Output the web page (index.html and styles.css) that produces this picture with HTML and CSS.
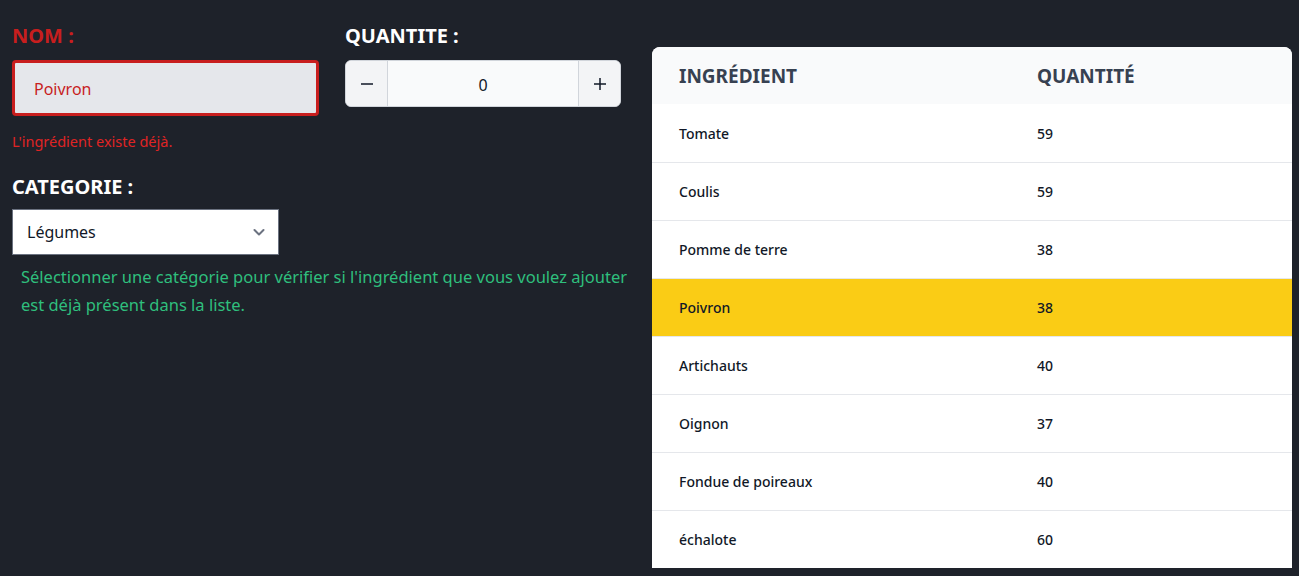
FILE: index.html
```html
<!DOCTYPE html>
<html lang="fr">
<head>
<meta charset="utf-8">
<title>Ingrédients</title>
<link rel="stylesheet" href="styles.css">
</head>
<body>
<main class="page">
  <section class="form">
    <div class="row-top">
      <div class="field field-nom">
        <label class="label label-error">NOM :</label>
        <div class="input input-error">Poivron</div>
        <p class="error-msg">L'ingrédient existe déjà.</p>
      </div>
      <div class="field field-qty">
        <label class="label">QUANTITE :</label>
        <div class="stepper">
          <button class="step-btn step-left" type="button">
            <svg width="16" height="16" viewBox="0 0 16 16"><path d="M2 8h12" stroke="#111827" stroke-width="1.5"/></svg>
          </button>
          <div class="step-value">0</div>
          <button class="step-btn step-right" type="button">
            <svg width="16" height="16" viewBox="0 0 16 16"><path d="M2 8h12M8 2v12" stroke="#111827" stroke-width="1.5"/></svg>
          </button>
        </div>
      </div>
    </div>
    <div class="field field-cat">
      <label class="label">CATEGORIE :</label>
      <div class="select">
        <span>Légumes</span>
        <svg width="14" height="14" viewBox="0 0 14 14"><path d="M2.5 5l4.5 4.5L11.5 5" fill="none" stroke="#6b7280" stroke-width="2" stroke-linecap="round" stroke-linejoin="round"/></svg>
      </div>
      <p class="help">Sélectionner une catégorie pour vérifier si l'ingrédient que vous voulez ajouter est déjà présent dans la liste.</p>
    </div>
  </section>
  <section class="table-card">
    <div class="thead">
      <div class="cell c1">INGRÉDIENT</div>
      <div class="cell c2">QUANTITÉ</div>
    </div>
    <div class="tr"><div class="cell c1">Tomate</div><div class="cell c2">59</div></div>
    <div class="tr"><div class="cell c1">Coulis</div><div class="cell c2">59</div></div>
    <div class="tr"><div class="cell c1">Pomme de terre</div><div class="cell c2">38</div></div>
    <div class="tr tr-hl"><div class="cell c1">Poivron</div><div class="cell c2">38</div></div>
    <div class="tr"><div class="cell c1">Artichauts</div><div class="cell c2">40</div></div>
    <div class="tr"><div class="cell c1">Oignon</div><div class="cell c2">37</div></div>
    <div class="tr"><div class="cell c1">Fondue de poireaux</div><div class="cell c2">40</div></div>
    <div class="tr tr-last"><div class="cell c1">échalote</div><div class="cell c2">60</div></div>
  </section>
</main>
</body>
</html>
```

FILE: styles.css
```css
* { box-sizing: border-box; }
html, body { margin: 0; padding: 0; }
body {
  background: #1e222a;
  font-family: "Noto Sans", "Open Sans", sans-serif;
  width: 1299px;
  height: 576px;
  overflow: hidden;
}
.page {
  display: flex;
  gap: 24px;
  padding: 22px 7px 0 12px;
}
.form {
  width: 616px;
  display: flex;
  flex-direction: column;
}
.row-top {
  display: flex;
  gap: 26px;
}
.field { display: flex; flex-direction: column; }
.field-nom { width: 307px; }
.field-qty { width: 276px; }
.label {
  font-size: 20px;
  font-weight: 700;
  line-height: 27px;
  color: #ffffff;
  margin-bottom: 11px;
}
.label-error { color: #c81e1e; }
.input {
  height: 56px;
  background: #e5e7eb;
  border-radius: 4px;
  padding: 0 19px;
  display: flex;
  align-items: center;
  font-size: 16px;
  color: #c81e1e;
  padding-top: 2px;
}
.input-error { border: 3px solid #c81e1e; }
.error-msg {
  margin: 13px 0 0;
  font-size: 14.5px;
  line-height: 24px;
  color: #e02424;
}
.stepper {
  display: flex;
  height: 47px;
  border: 1px solid #d1d5db;
  border-radius: 6px;
  overflow: hidden;
  background: #f9fafb;
}
.step-btn {
  width: 42px;
  border: 0;
  background: #f3f4f6;
  display: flex;
  align-items: center;
  justify-content: center;
  padding: 0;
}
.step-left { border-right: 1px solid #d1d5db; }
.step-right { border-left: 1px solid #d1d5db; }
.step-value {
  flex: 1;
  display: flex;
  align-items: center;
  justify-content: center;
  font-size: 16px;
  color: #111827;
  padding-top: 2px;
}
.field-cat { margin-top: 20px; }
.field-cat .label { margin-bottom: 9px; }
.select {
  width: 267px;
  height: 46px;
  background: #ffffff;
  border: 1px solid #6b7280;
  display: flex;
  align-items: center;
  justify-content: space-between;
  padding: 0 12px 0 14px;
  font-size: 16px;
  color: #111827;
}
.help {
  margin: 8px 0 0;
  padding-left: 9px;
  font-size: 16.5px;
  line-height: 28px;
  color: #2fbf7d;
}
.table-card {
  width: 640px;
  margin-top: 25px;
  background: #ffffff;
  border-radius: 8px 8px 0 0;
  overflow: hidden;
}
.thead {
  display: flex;
  height: 57px;
  align-items: center;
  background: #f9fafb;
  font-size: 19px;
  font-weight: 700;
  color: #374151;
}
.tr {
  display: flex;
  height: 58px;
  align-items: center;
  border-top: 1px solid #e5e7eb;
  font-size: 14px;
  font-weight: 500;
  color: #111827;
}
.thead + .tr { border-top: 0; padding-top: 1px; }
.tr-hl { background: #facc15; }
.cell.c1 { width: 385px; padding-left: 27px; }
.cell.c2 { flex: 1; }
```
